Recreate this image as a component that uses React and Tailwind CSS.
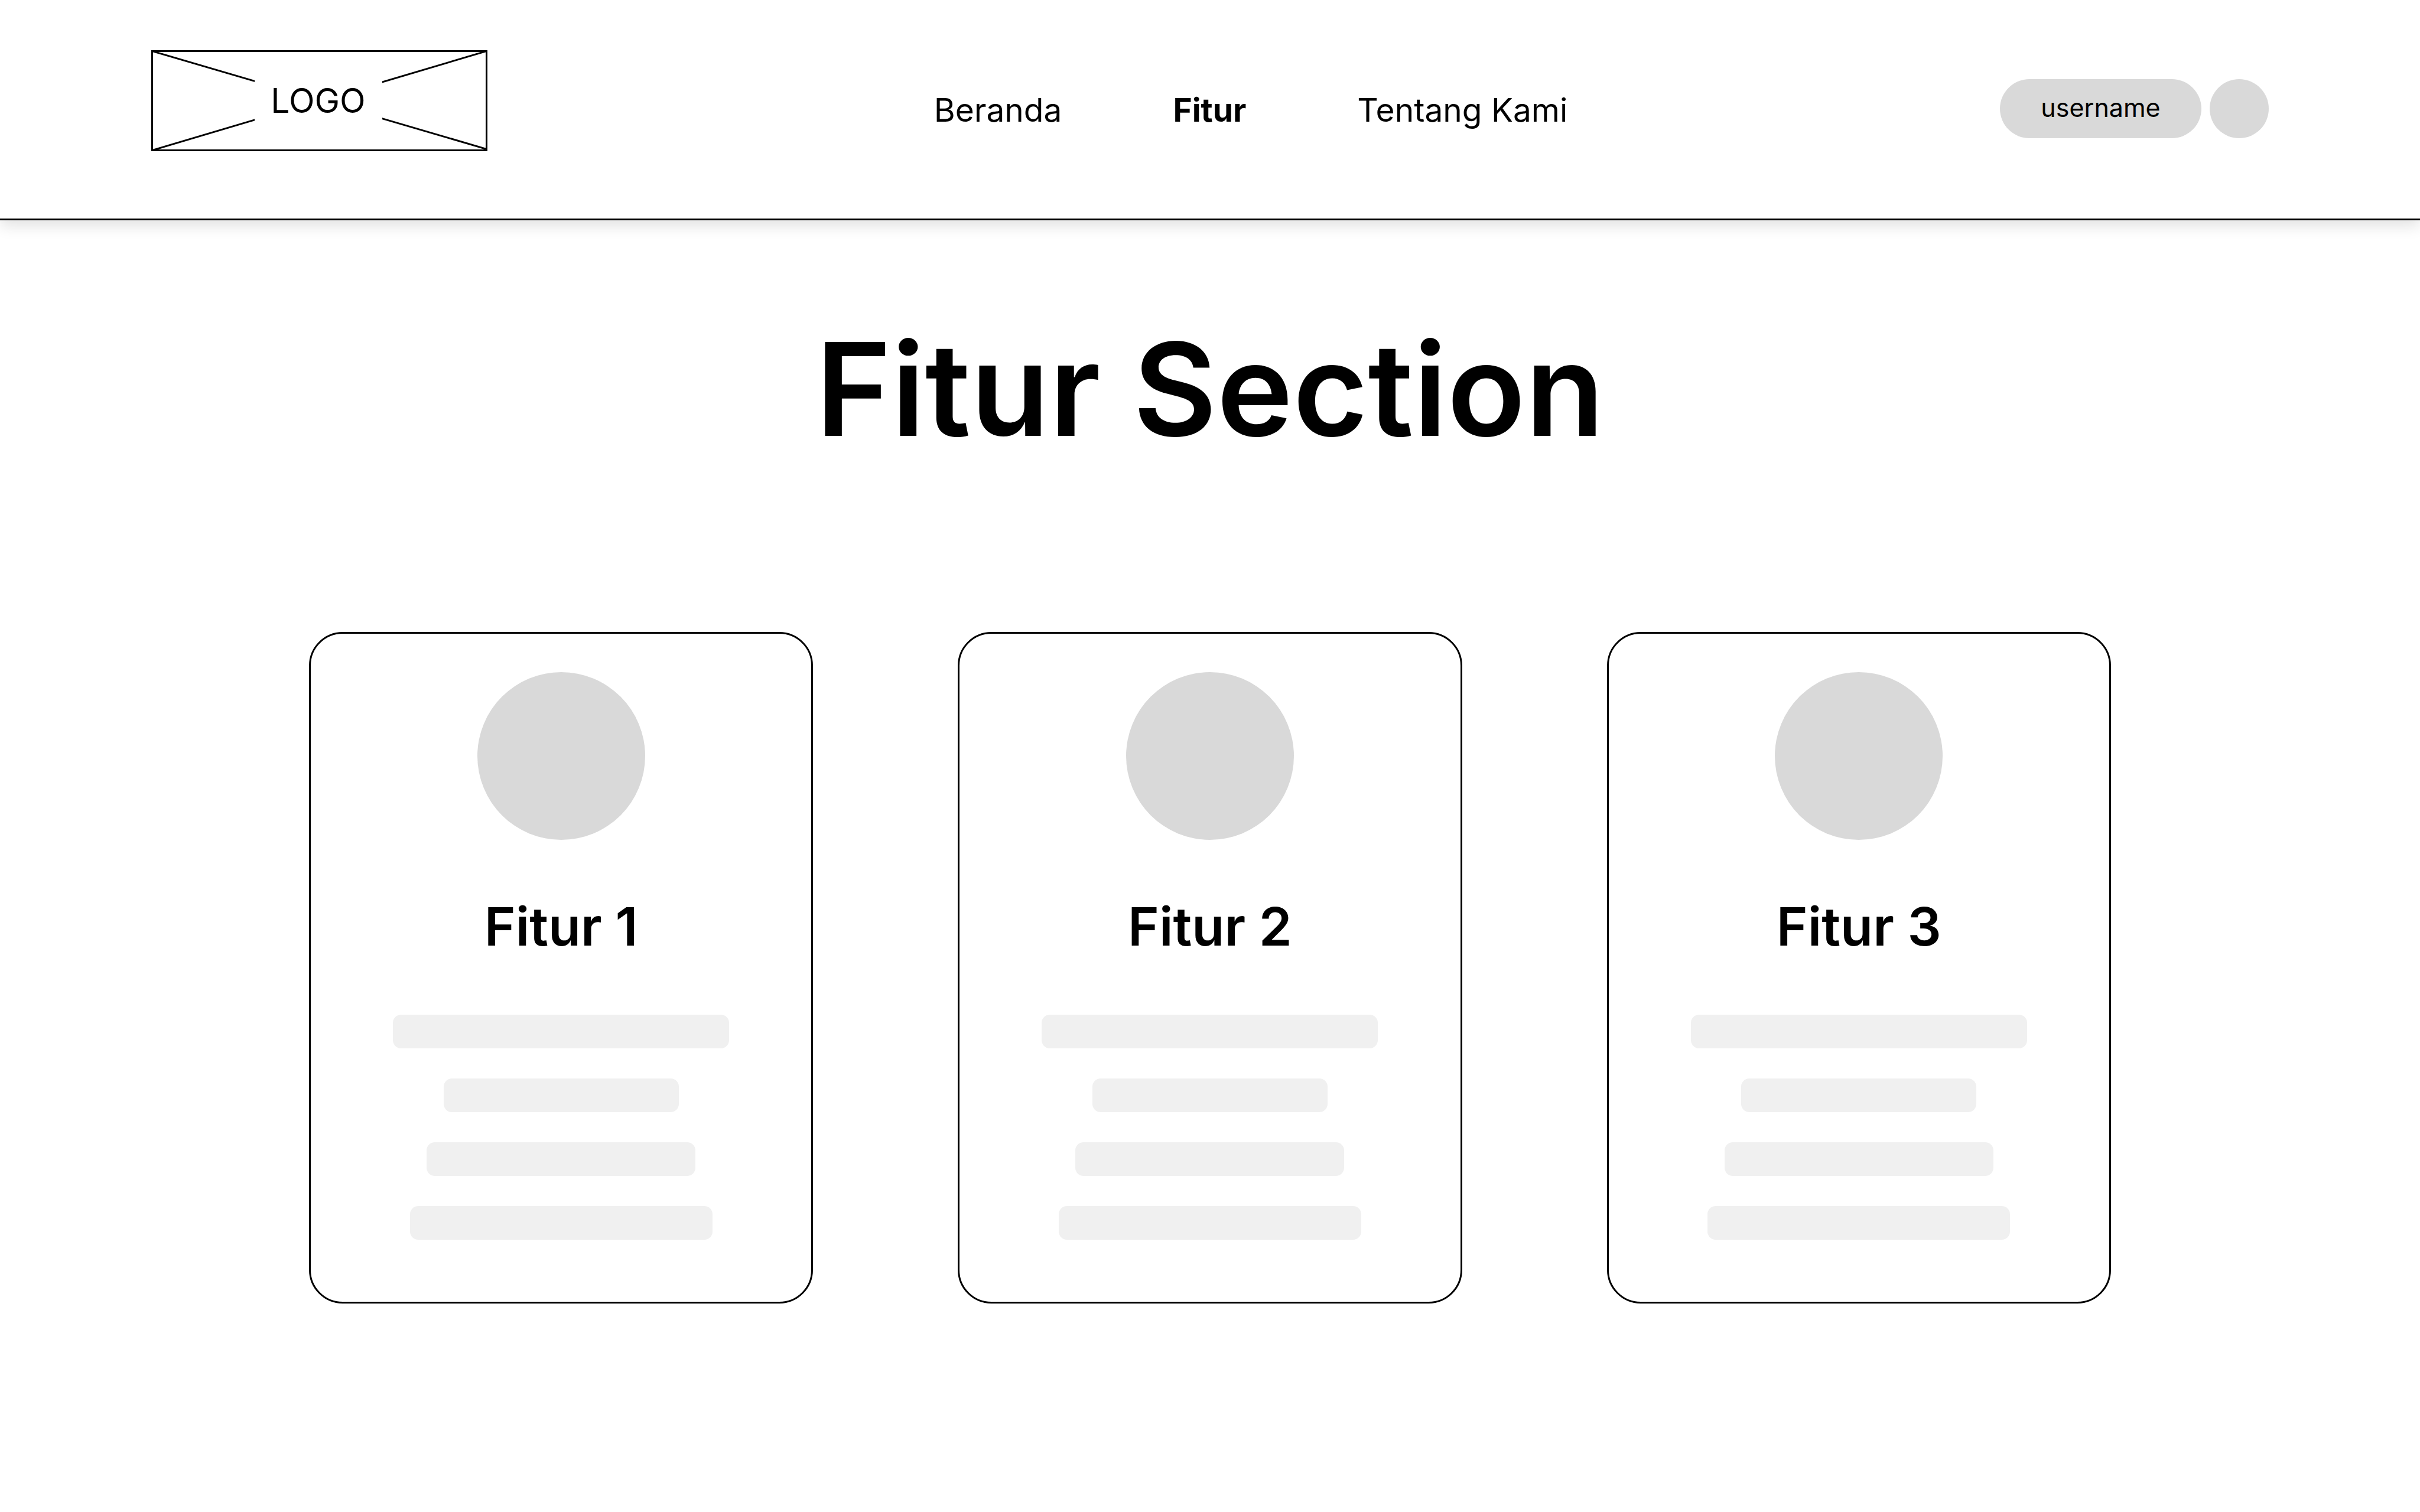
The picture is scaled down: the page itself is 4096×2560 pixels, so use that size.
const links = [
  { label: "Beranda", href: "#beranda" },
  { label: "Fitur", href: "#fitur", current: true },
  { label: "Tentang Kami", href: "#tentang-kami" },
];

const features = ["Fitur 1", "Fitur 2", "Fitur 3"];

function Logo() {
  return (
    <a
      href="#beranda"
      className="relative flex h-[171px] w-[569px] items-center justify-center border-3 border-black pr-1"
    >
      <svg
        className="absolute inset-0 h-full w-full"
        viewBox="0 0 563 165"
        fill="none"
        stroke="black"
        strokeWidth="3"
        aria-hidden="true"
      >
        <path d="M0 -1L563 164M0 166L563 -1" />
      </svg>
      <span className="relative w-[216px] bg-white text-center text-[57px] leading-[80px]">
        LOGO
      </span>
    </a>
  );
}

function Header() {
  return (
    <header className="flex items-start justify-between border-b-3 border-black bg-white px-[256px] pt-[85px] pb-[114px] shadow-[0_9px_24px_rgba(0,0,0,0.12)]">
      <Logo />
      <nav className="mt-[65px] flex gap-[188px] pl-6 text-[55px] leading-[72px]">
        {links.map((link) => (
          <a
            key={link.label}
            href={link.href}
            aria-current={link.current ? "page" : undefined}
            className={link.current ? "font-bold" : "font-normal"}
          >
            {link.label}
          </a>
        ))}
      </nav>
      <div className="mt-[49px] flex gap-[14px]">
        <button
          type="button"
          className="h-[100px] w-[341px] rounded-full bg-[#d9d9d9] pb-1 text-[43px] leading-[60px]"
        >
          username
        </button>
        <button
          type="button"
          aria-label="Profil"
          className="size-[100px] rounded-full bg-[#d9d9d9]"
        />
      </div>
    </header>
  );
}

function FeatureCard({ title }) {
  return (
    <article className="flex flex-col items-center rounded-[57px] border-3 border-black pt-[65px] pb-[105px]">
      <div className="size-[284px] rounded-full bg-[#d9d9d9]" />
      <h2 className="mt-[91px] text-[90px] leading-[112px] font-semibold">
        {title}
      </h2>
      <div className="mt-[93px] flex w-[569px] flex-col items-center gap-[51px]">
        <div className="h-[57px] w-full rounded-[14px] bg-[#f0f0f0]" />
        <div className="h-[57px] w-[398px] rounded-[14px] bg-[#f0f0f0]" />
        <div className="h-[57px] w-[455px] rounded-[14px] bg-[#f0f0f0]" />
        <div className="h-[57px] w-[512px] rounded-[14px] bg-[#f0f0f0]" />
      </div>
    </article>
  );
}

export default function App() {
  return (
    <div className="min-h-screen bg-white font-['Inter',sans-serif] text-black">
      <Header />
      <main className="pt-[166px]">
        <h1 className="text-center text-[218px] leading-[240px] font-semibold">
          Fitur Section
        </h1>
        <section className="mt-[291px] grid grid-cols-3 gap-[245px] px-[523px]">
          {features.map((title) => (
            <FeatureCard key={title} title={title} />
          ))}
        </section>
      </main>
    </div>
  );
}
